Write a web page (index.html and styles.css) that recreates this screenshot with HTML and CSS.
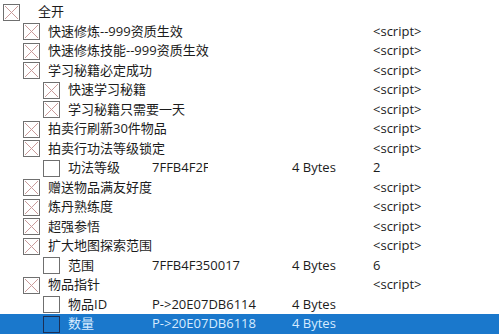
FILE: index.html
```html
<!DOCTYPE html>
<html>
<head>
<meta charset="utf-8">
<link rel="stylesheet" href="styles.css">
</head>
<body>
<svg width="0" height="0" class="defs">
  <defs>
    <symbol id="cx" viewBox="0 0 17 17">
      <rect x="0.5" y="0.5" width="16" height="16" fill="#fff" stroke="#6f6f6f"/>
      <line x1="2" y1="2" x2="15" y2="15" stroke="#c99a9a" stroke-width="1"/>
      <line x1="15" y1="2" x2="2" y2="15" stroke="#c99a9a" stroke-width="1"/>
    </symbol>
    <symbol id="ce" viewBox="0 0 17 17">
      <rect x="0.5" y="0.5" width="16" height="16" fill="#fff" stroke="#6f6f6f"/>
    </symbol>
    <symbol id="cs" viewBox="0 0 17 17">
      <rect x="0.5" y="0.5" width="16" height="16" fill="#1a78cc" stroke="#1b2f55"/>
    </symbol>
  </defs>
</svg>
<div class="list">
  <div class="row l0"><div class="name"><svg class="box"><use href="#cx"/></svg><span class="label">全开</span></div><div></div><div></div><div></div></div>
  <div class="row l1"><div class="name"><svg class="box"><use href="#cx"/></svg><span class="label">快速修炼--999资质生效</span></div><div></div><div></div><div>&lt;script&gt;</div></div>
  <div class="row l1"><div class="name"><svg class="box"><use href="#cx"/></svg><span class="label">快速修炼技能--999资质生效</span></div><div></div><div></div><div>&lt;script&gt;</div></div>
  <div class="row l1"><div class="name"><svg class="box"><use href="#cx"/></svg><span class="label">学习秘籍必定成功</span></div><div></div><div></div><div>&lt;script&gt;</div></div>
  <div class="row l2"><div class="name"><svg class="box"><use href="#cx"/></svg><span class="label">快速学习秘籍</span></div><div></div><div></div><div>&lt;script&gt;</div></div>
  <div class="row l2"><div class="name"><svg class="box"><use href="#cx"/></svg><span class="label">学习秘籍只需要一天</span></div><div></div><div></div><div>&lt;script&gt;</div></div>
  <div class="row l1"><div class="name"><svg class="box"><use href="#cx"/></svg><span class="label">拍卖行刷新30件物品</span></div><div></div><div></div><div>&lt;script&gt;</div></div>
  <div class="row l1"><div class="name"><svg class="box"><use href="#cx"/></svg><span class="label">拍卖行功法等级锁定</span></div><div></div><div></div><div>&lt;script&gt;</div></div>
  <div class="row l2"><div class="name"><svg class="box"><use href="#ce"/></svg><span class="label">功法等级</span></div><div><span class="clip">7FFB4F2F</span></div><div>4 Bytes</div><div>2</div></div>
  <div class="row l1"><div class="name"><svg class="box"><use href="#cx"/></svg><span class="label">赠送物品满友好度</span></div><div></div><div></div><div>&lt;script&gt;</div></div>
  <div class="row l1"><div class="name"><svg class="box"><use href="#cx"/></svg><span class="label">炼丹熟练度</span></div><div></div><div></div><div>&lt;script&gt;</div></div>
  <div class="row l1"><div class="name"><svg class="box"><use href="#cx"/></svg><span class="label">超强参悟</span></div><div></div><div></div><div>&lt;script&gt;</div></div>
  <div class="row l1"><div class="name"><svg class="box"><use href="#cx"/></svg><span class="label">扩大地图探索范围</span></div><div></div><div></div><div>&lt;script&gt;</div></div>
  <div class="row l2"><div class="name"><svg class="box"><use href="#ce"/></svg><span class="label">范围</span></div><div>7FFB4F350017</div><div>4 Bytes</div><div>6</div></div>
  <div class="row l1"><div class="name"><svg class="box"><use href="#cx"/></svg><span class="label">物品指针</span></div><div></div><div></div><div>&lt;script&gt;</div></div>
  <div class="row l2"><div class="name"><svg class="box"><use href="#ce"/></svg><span class="label">物品ID</span></div><div>P-&gt;20E07DB6114</div><div>4 Bytes</div><div></div></div>
  <div class="row l2 sel"><div class="name"><svg class="box"><use href="#cs"/></svg><span class="label">数量</span></div><div>P-&gt;20E07DB6118</div><div>4 Bytes</div><div></div></div>
</div>
</body>
</html>
```

FILE: styles.css
```css
html, body {
  margin: 0;
  padding: 0;
  background: #fff;
}
body {
  width: 499px;
  height: 335px;
  overflow: hidden;
  font-family: "Open Sans", "Noto Sans CJK SC", sans-serif;
  font-size: 13px;
  color: #1c1c1c;
}
.defs {
  position: absolute;
  width: 0;
  height: 0;
}
.list {
  padding-top: 2.25px;
}
.row {
  display: grid;
  grid-template-columns: 152px 140px 81px 1fr;
  height: 19.5px;
  align-items: center;
  white-space: nowrap;
}
.row > div {
  line-height: 19.5px;
}
.name {
  display: flex;
  align-items: center;
  overflow: visible;
}
.box {
  width: 17px;
  height: 17px;
  flex: none;
}
.l0 .name { padding-left: 3px; }
.l0 .label { margin-left: 18px; }
.l1 .name { padding-left: 23px; }
.l1 .label { margin-left: 8px; }
.l2 .name { padding-left: 43px; }
.l2 .label { margin-left: 8px; }
.clip {
  display: inline-block;
  width: 56px;
  overflow: hidden;
  vertical-align: top;
}
.sel {
  background: #1a78cc;
  color: #d6ebff;
}
```
